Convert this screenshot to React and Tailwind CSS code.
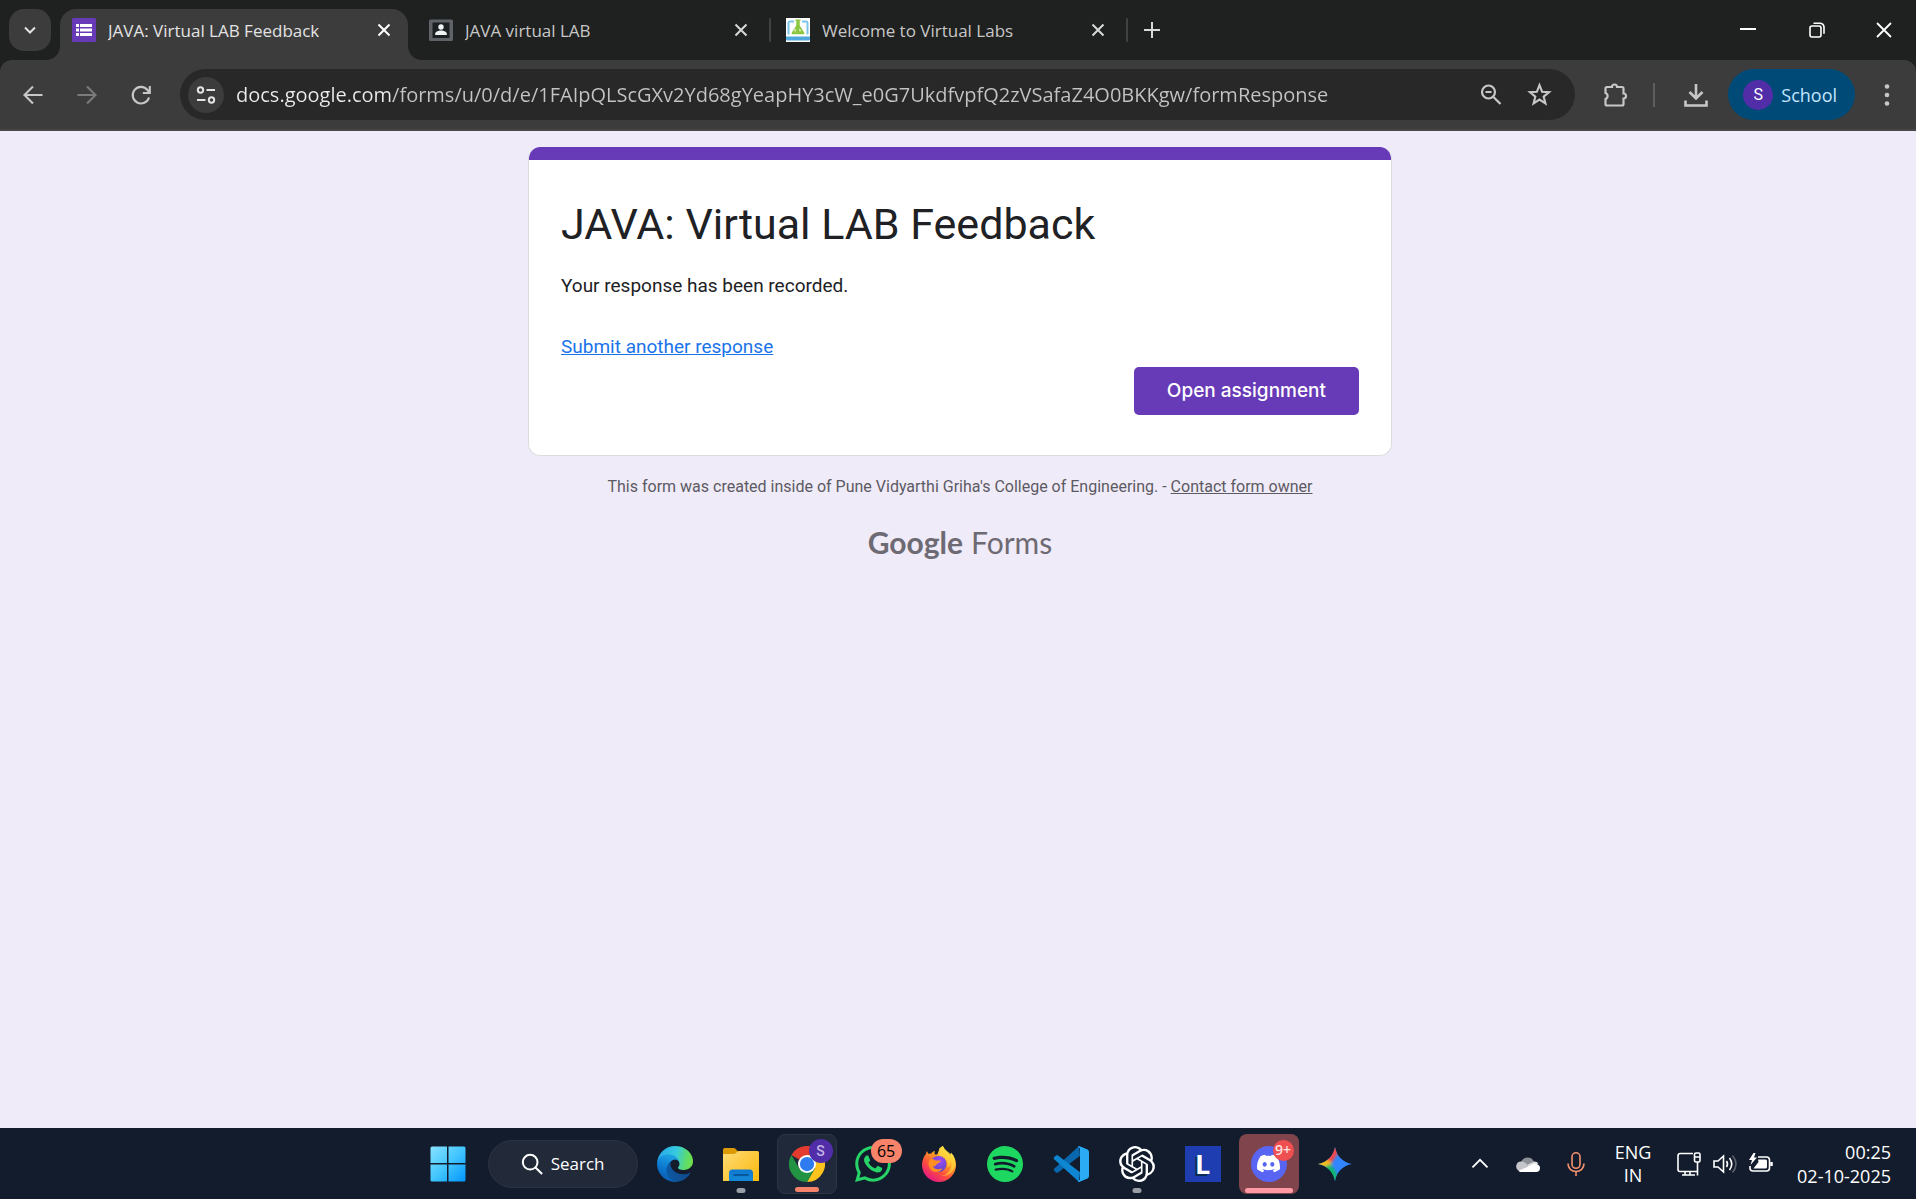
import React from "react";
import { SiOpenai, SiSpotify, SiWhatsapp, SiDiscord } from "react-icons/si";

const UI = "font-['Open_Sans','Noto_Sans',sans-serif]";

function Stroke({ size = 24, width = 2, children, className = "", box = 24 }) {
  return (
    <svg width={size} height={size} viewBox={`0 0 ${box} ${box}`} fill="none" stroke="currentColor" strokeWidth={width} className={`shrink-0 ${className}`} aria-hidden="true">
      {children}
    </svg>
  );
}

function IconButton({ label, className = "", children }) {
  return (
    <button type="button" aria-label={label} className={`flex shrink-0 items-center justify-center ${className}`}>
      {children}
    </button>
  );
}

function FormsFavicon() {
  return (
    <svg width="24" height="24" viewBox="0 0 24 24" aria-hidden="true">
      <rect width="24" height="24" rx="1.5" fill="#673ab7" />
      <g fill="#fff">
        <rect x="4" y="6" width="3" height="3" />
        <rect x="8" y="6" width="12" height="3" />
        <rect x="4" y="10.5" width="3" height="3" />
        <rect x="8" y="10.5" width="12" height="3" />
        <rect x="4" y="15" width="3" height="3" />
        <rect x="8" y="15" width="12" height="3" />
      </g>
    </svg>
  );
}

function ClassroomFavicon() {
  return (
    <svg width="24" height="24" viewBox="0 0 24 24" aria-hidden="true">
      <rect y="1.5" width="24" height="21.5" rx="1.5" fill="#5f6368" />
      <rect x="3.5" y="4.5" width="17" height="15.5" fill="#1d2023" />
      <circle cx="12" cy="9" r="2.7" fill="#f1f3f4" />
      <path d="M6.2 17v-1.2c0-2 3-3.3 5.8-3.3s5.800 1.300 5.800 3.300V17z" fill="#f1f3f4" />
    </svg>
  );
}

function LabsFavicon() {
  return (
    <svg width="24" height="24" viewBox="0 0 24 24" aria-hidden="true">
      <rect width="24" height="24" fill="#fff" />
      <path d="M8 3.500H4a1.500 1.500 0 0 0-1.500 1.500v11.500M16 3.500h4A1.500 1.500 0 0 1 21.500 5v11.500" stroke="#7cc4e8" strokeWidth="2" fill="none" />
      <path d="M0 18.500h24v2.500a1.500 1.500 0 0 1-1.500 1.500h-21A1.500 1.500 0 0 1 0 21z" fill="#4fa9dc" />
      <path d="M9.500 1.500h5v1.500h-.8v4.500l4.600 7.200a1 1 0 0 1-.9 1.500H6.600a1 1 0 0 1-.9-1.500l4.600-7.200V3h-.8z" fill="#8cc63f" />
      <path d="M8 11.500l2-.5-.7 4zM13 10l2.500 3-2 .5z" fill="#e5f3c4" />
    </svg>
  );
}

function CloseX({ className = "" }) {
  return (
    <Stroke size={24} width={2} className={className}>
      <path d="M6.500 6.500l11 11M17.500 6.500l-11 11" />
    </Stroke>
  );
}

function Tab({ icon, title, active, className = "" }) {
  return (
    <div className={`relative flex items-center pr-3 pl-3 ${active ? "h-[51px] rounded-t-2xl bg-[#3c3c3c] pb-[9px] text-[#e3e3e3]" : "h-[51px] pb-[9px] text-[#c7c7c7]"} ${className}`}>
      {active && (
        <>
          <svg width="14" height="14" viewBox="0 0 14 14" className="absolute bottom-0 left-[-14px]" aria-hidden="true"><path d="M14 0v14H0A14 14 0 0 0 14 0z" fill="#3c3c3c" /></svg>
          <svg width="14" height="14" viewBox="0 0 14 14" className="absolute right-[-14px] bottom-0" aria-hidden="true"><path d="M0 0v14h14A14 14 0 0 1 0 0z" fill="#3c3c3c" /></svg>
        </>
      )}
      <button type="button" role="tab" aria-selected={!!active} className="flex min-w-0 flex-1 items-center gap-3 text-left">
        {icon}
        <span className="truncate pt-[2px] text-[17px] leading-6">{title}</span>
      </button>
      <IconButton label={`Close ${title}`}><CloseX className={active ? "text-white" : "text-[#d8d8d8]"} /></IconButton>
    </div>
  );
}

function TabStrip() {
  return (
    <header className="flex h-[60px] items-start bg-[#1f2120] pt-[9px] pl-[9px]">
      <IconButton label="Search tabs" className="h-[42px] w-[42px] rounded-[15px] bg-[#3c3c3c] text-[#e3e3e3]">
        <Stroke size={20} width={2.4}><path d="M6 9l6 6 6-6" /></Stroke>
      </IconButton>
      <div role="tablist" className="ml-[9px] flex">
        <Tab active icon={<FormsFavicon />} title="JAVA: Virtual LAB Feedback" className="w-[348px]" />
        <Tab icon={<ClassroomFavicon />} title="JAVA virtual LAB" className="ml-[9px] w-[348px]" />
        <div className="mr-[3px] ml-1 mt-[9px] h-6 w-[2px] rounded bg-[#3f4241]" />
        <Tab icon={<LabsFavicon />} title="Welcome to Virtual Labs" className="w-[348px]" />
      </div>
      <div className="mr-[3px] ml-1 mt-[9px] h-6 w-[2px] rounded bg-[#3f4241]" />
      <IconButton label="New tab" className="h-[42px] w-[42px] text-[#d8d8d8]">
        <Stroke size={24} width={2}><path d="M12 4v16M4 12h16" /></Stroke>
      </IconButton>
      <div className="ml-auto flex text-white">
        <IconButton label="Minimize" className="h-[42px] w-[69px]"><Stroke size={16} box={16}><path d="M0 7h16" /></Stroke></IconButton>
        <IconButton label="Restore" className="h-[42px] w-[70px]">
          <Stroke size={16} box={16} width={1.6}><rect x="1" y="4" width="11" height="11" rx="2" /><path d="M4.500 1.200H11a4 4 0 0 1 4 4v6.500" /></Stroke>
        </IconButton>
        <IconButton label="Close window" className="h-[42px] w-16"><Stroke size={16} box={16} width={1.8}><path d="M1 1l14 14M15 1L1 15" /></Stroke></IconButton>
      </div>
    </header>
  );
}

function Toolbar() {
  return (
    <nav className="flex h-[71px] items-center rounded-t-xl border-b-2 border-[#474747] bg-[#3c3c3c] pl-[15px] text-[#c7c7c7]">
      <IconButton label="Back" className="h-9 w-9"><Stroke size={24} width={2.1}><path d="M21.500 12H4M12 3.500L3.500 12l8.500 8.500" /></Stroke></IconButton>
      <IconButton label="Forward" className="ml-[18px] h-9 w-9 text-[#7b7b7b]"><Stroke size={24} width={2.1}><path d="M2.500 12H20M12 3.500l8.500 8.500-8.500 8.500" /></Stroke></IconButton>
      <IconButton label="Reload" className="ml-[18px] h-9 w-9"><Stroke size={24} width={2.1}><path d="M20 14.500A8.300 8.300 0 1 1 18.500 7L20.500 9.500M20.800 3v7h-7" /></Stroke></IconButton>
      <div className="ml-[21px] flex h-[51px] min-w-0 flex-1 items-center rounded-full bg-[#282828] pr-5 pl-2">
        <IconButton label="View site information" className="h-9 w-9 rounded-full bg-[#3c3c3c] text-[#e3e3e3]">
          <Stroke size={24} width={2}><circle cx="6.500" cy="7" r="2.700" /><path d="M12.500 7H21M3 17h8.500" /><circle cx="17.500" cy="17" r="2.700" /></Stroke>
        </IconButton>
        <input
          type="text"
          aria-label="Address and search bar"
          defaultValue="docs.google.com/forms/u/0/d/e/1FAIpQLScGXv2Yd68gYeapHY3cW_e0G7UkdfvpfQ2zVSafaZ4O0BKKgw/formResponse"
          className="ml-3 h-9 min-w-0 flex-1 bg-[linear-gradient(90deg,#ececec_157px,#c4c4c4_157px)] bg-clip-text text-xl text-transparent outline-none"
        />
        <IconButton label="Zoom" className="h-8 w-8"><Stroke size={24} width={2.2}><circle cx="9.500" cy="9" r="6.500" /><path d="M6.500 9h6M14.200 13.700l7.300 7.300" /></Stroke></IconButton>
        <IconButton label="Bookmark this tab" className="ml-4 h-8 w-8"><Stroke size={25} width={2}><path d="M12 3l2.500 6.300 6.700.4-5.200 4.300 1.700 6.600L12 16.900l-5.700 3.700L8 14 2.800 9.700l6.700-.4z" /></Stroke></IconButton>
      </div>
      <IconButton label="Extensions" className="ml-6 h-8 w-8"><Stroke size={28} width={2.2} box={28}><path d="M4.500 7.500q0-1.500 1.500-1.500h5a2.500 2.500 0 0 1 5 0H21q1.500 0 1.500 1.500v5a2.500 2.500 0 0 1 0 5v5.500q0 1.500-1.500 1.500H6q-1.500 0-1.500-1.500v-5a3.200 3.200 0 0 0 0-6z" /></Stroke></IconButton>
      <div className="ml-[22px] h-6 w-[2px] bg-[#5e5e5e]" />
      <IconButton label="Downloads" className="ml-[25px] h-8 w-8"><Stroke size={28} width={2.6} box={28}><path d="M14 3v14M7.500 11l6.500 6.500 6.500-6.500M3.500 19.500v5h21v-5" /></Stroke></IconButton>
      <button type="button" className="ml-4 flex h-[51px] shrink-0 items-center gap-2 rounded-full bg-[#004a77] pr-[18px] pl-[15px] text-[#c2e7ff]">
        <span className="flex h-[30px] w-[30px] items-center justify-center rounded-full bg-[#512da8] font-['Roboto',sans-serif] text-base text-white">S</span>
        <span className="text-lg leading-6">School</span>
      </button>
      <IconButton label="Chrome menu" className="mr-[11px] ml-[14px] h-9 w-9">
        <svg width="28" height="28" viewBox="0 0 28 28" fill="currentColor" aria-hidden="true"><circle cx="14" cy="5.500" r="2.300" /><circle cx="14" cy="14" r="2.300" /><circle cx="14" cy="22.500" r="2.300" /></svg>
      </IconButton>
    </nav>
  );
}

function FormPage() {
  return (
    <main className="flex flex-1 flex-col items-center bg-[#f0ebf8] pt-4 pr-[2px] pl-[6px] font-['Roboto',sans-serif]">
      <section className="w-full max-w-[864px] overflow-hidden rounded-xl border border-[#dadce0] border-t-0 bg-white">
        <div className="h-[13px] bg-[#673ab7]" />
        <div className="px-8 pt-[35px] pb-10 text-[#202124]">
          <h1 className="text-[43px] leading-[58px]">JAVA: Virtual LAB Feedback</h1>
          <p className="mt-[19px] text-[19px] leading-7">Your response has been recorded.</p>
          <p className="mt-[33px] text-[19px] leading-7"><a href="#another" className="text-[#1a73e8] underline">Submit another response</a></p>
          <div className="mt-[6px] flex justify-end">
            <button type="button" className="h-12 rounded-[5px] bg-[#673ab7] px-[33px] font-['Inter',sans-serif] text-[19px] font-medium text-white">Open assignment</button>
          </div>
        </div>
      </section>
      <p className="mt-[19px] text-base leading-6 text-[#5c5a63]">
        This form was created inside of Pune Vidyarthi Griha's College of Engineering. - <a href="#contact" className="underline">Contact form owner</a>
      </p>
      <a href="#forms" className="mt-[23px] flex items-baseline gap-2 font-['Lato',sans-serif] text-[30px] leading-10 text-[#6d6a73]">
        <span className="font-bold">Google</span><span>Forms</span>
      </a>
    </main>
  );
}

function WindowsLogo() {
  return (
    <svg width="36" height="36" viewBox="0 0 36 36" aria-hidden="true">
      <defs><linearGradient id="win" x1="0" y1="0" x2="36" y2="36" gradientUnits="userSpaceOnUse"><stop stopColor="#8ae3ff" /><stop offset=".5" stopColor="#43c6ff" /><stop offset="1" stopColor="#0093fb" /></linearGradient></defs>
      <path d="M2 .5h15v16.500H.5V2A1.500 1.500 0 0 1 2 .5zM18.500.5H34A1.500 1.500 0 0 1 35.500 2v15h-17zM.5 18.500H17v17H2A1.500 1.500 0 0 1 .5 34zM18.500 18.500h17V34a1.500 1.500 0 0 1-1.500 1.500H18.500z" fill="url(#win)" />
    </svg>
  );
}

function EdgeLogo() {
  return (
    <svg width="36" height="36" viewBox="0 0 256 256" aria-hidden="true">
      <defs>
        <linearGradient id="e1" x1="60" y1="175" x2="240" y2="175" gradientUnits="userSpaceOnUse"><stop stopColor="#0c59a4" /><stop offset="1" stopColor="#114a8b" /></linearGradient>
        <linearGradient id="e2" x1="110" y1="90" x2="40" y2="240" gradientUnits="userSpaceOnUse"><stop stopColor="#1b9de2" /><stop offset=".5" stopColor="#0c78cf" /><stop offset="1" stopColor="#0a5cb0" /></linearGradient>
        <linearGradient id="e3" x1="10" y1="60" x2="250" y2="110" gradientUnits="userSpaceOnUse"><stop stopColor="#28a8e8" /><stop offset=".5" stopColor="#36cbe0" /><stop offset=".8" stopColor="#5adb72" /><stop offset="1" stopColor="#6fe04a" /></linearGradient>
      </defs>
      <path d="M231 190a94 94 0 0 1-10.500 4.700 101.900 101.900 0 0 1-36 6.400c-47.400 0-88.700-32.600-88.700-74.500a31.500 31.500 0 0 1 16.400-27.300C69.400 101.100 58.400 145.700 58.400 171.900c0 74 68.100 81.400 82.800 81.400 7.900 0 19.800-2.300 27-4.600l1.300-.4a128.300 128.300 0 0 0 66.600-52.800 4 4 0 0 0-5.100-5.500z" fill="url(#e1)" />
      <path d="M105.700 241.400a79.200 79.200 0 0 1-22.700-21.300 80.700 80.700 0 0 1 29.500-120.800c3.200-1.500 8.500-4.100 15.600-4a32.400 32.400 0 0 1 25.700 13 31.900 31.900 0 0 1 6.300 18.700c0-.2 24.500-79.600-80-79.600-43.900 0-80 41.700-80 78.200a130.200 130.200 0 0 0 12.100 56 128 128 0 0 0 156.400 67 75.500 75.500 0 0 1-62.800-7.200z" fill="url(#e2)" />
      <path d="M152.300 148.900c-.8 1-3.300 2.500-3.300 5.700 0 2.600 1.700 5.200 4.800 7.300 14.300 10 41.400 8.600 41.500 8.600a59.600 59.600 0 0 0 30.300-8.300 61.400 61.400 0 0 0 30.400-52.900c.3-22.400-8-37.300-11.300-43.900C223.500 23.900 177.700 0 128 0A128 128 0 0 0 0 126.200c.5-36.500 36.800-66 80-66 3.500 0 23.500.3 42 10 16.300 8.600 24.900 18.900 30.800 29.200 6.200 10.700 7.300 24.100 7.300 29.500s-2.700 13.300-7.800 20z" fill="url(#e3)" />
    </svg>
  );
}

function FolderLogo() {
  return (
    <svg width="36" height="36" viewBox="0 0 36 36" aria-hidden="true">
      <defs>
        <linearGradient id="f1" x1="0" y1="4" x2="30" y2="34" gradientUnits="userSpaceOnUse"><stop stopColor="#ffdc78" /><stop offset="1" stopColor="#fbbc16" /></linearGradient>
        <linearGradient id="f2" x1="0" y1="24" x2="0" y2="35" gradientUnits="userSpaceOnUse"><stop stopColor="#0f78d0" /><stop offset="1" stopColor="#1389d8" /></linearGradient>
      </defs>
      <path d="M0 3.500Q0 2 1.500 2h9q1.300 0 2.200.9L15 5.500 12 8H0z" fill="#dc9a05" />
      <path d="M0 8h10.500q1.300 0 2.300-1l1.200-1.200q.8-.8 2-.8h18.500Q36 5 36 6.500V35H0z" fill="url(#f1)" />
      <path d="M6 35v-8q0-3.500 3.500-3.500h17Q30 23.500 30 27v8z" fill="url(#f2)" />
      <path d="M11 29h14" stroke="#064b8c" strokeWidth="1.600" strokeLinecap="round" />
    </svg>
  );
}

function ChromeLogo() {
  return (
    <svg width="36" height="36" viewBox="0 0 48 48" aria-hidden="true">
      <path d="M24 24L3.200 12A24 24 0 0 1 44.800 12H24z" fill="#e33b2e" />
      <path d="M24 12h20.800A24 24 0 0 1 24 48l10.400-18z" fill="#fcc31e" />
      <path d="M3.200 12L13.600 30 24 36l10.400-6L24 48A24 24 0 0 1 3.200 12z" fill="#229342" />
      <circle cx="24" cy="24" r="12" fill="#fff" />
      <circle cx="24" cy="24" r="9.500" fill="#2e7cf0" />
    </svg>
  );
}

function FirefoxLogo() {
  return (
    <svg width="36" height="36" viewBox="0 0 36 36" aria-hidden="true">
      <defs>
        <linearGradient id="x1" x1="29" y1="4" x2="8" y2="34" gradientUnits="userSpaceOnUse"><stop stopColor="#fff44f" /><stop offset=".35" stopColor="#ff9a25" /><stop offset=".65" stopColor="#ff4f3d" /><stop offset="1" stopColor="#e31587" /></linearGradient>
        <radialGradient id="x2" cx=".6" cy=".3" r=".7"><stop stopColor="#a04bf5" /><stop offset="1" stopColor="#5a46c8" /></radialGradient>
      </defs>
      <path d="M1 19C1 14 3 10 5 8c0-1 .3-2 1-3 .4 1.500 1 2.300 2 3 .7-.4 1.500-.5 2.300-.5C11.300 6.200 12.600 5 14 5c-.7 1.300-.6 2.500 0 3.500h2C18 6 17.500 2 22 0c1.500 4.500 5 6 7.500 9L30 6.500c3.500 3.500 5 8 5 12.500a17 17 0 0 1-34 0z" fill="url(#x1)" />
      <path d="M18 2.500C18 8 17 9 18.500 11 25 10 28 16 26 22c3-1.500 4-5 4-8 2 10-4 16-11 16 14 1 18-12 13-20-3-4-8-5-10-10-3 1.500-3.500 2-4 2.500z" fill="#ffd83d" opacity=".65" />
      <circle cx="17.500" cy="18" r="8" fill="url(#x2)" />
      <path d="M8.500 14c2-1.500 4-1.500 6 .5h5c.6 1.500-2 2.300-3.500 3.500-1.400 1.300-1.300 2.700-4 2.300 1 3 5 4 9.500 2-2 4.500-10 5.500-13-.5-1.300-2.600-1.200-5.200 0-7.800z" fill="#ff8f24" />
    </svg>
  );
}

function VSCodeLogo() {
  return (
    <svg width="36" height="36" viewBox="0 0 36 36" aria-hidden="true">
      <path d="M26 0L1.200 22.800a1.400 1.400 0 0 0 0 2L3 26.500q1 .8 2 .1L27 9.800z" fill="#0967ad" />
      <path d="M26 36L1.200 13.200a1.400 1.400 0 0 1 0-2L3 9.500q1-.8 2-.1l22 16.800z" fill="#0e86d2" />
      <path d="M26 0l8.500 3.600Q36 4.300 36 6v24q0 1.700-1.500 2.400L26 36q-.6 0-1-.5l2-2V2.500l-2-2q.4-.5 1-.5z" fill="#2aabf4" />
    </svg>
  );
}

function GeminiLogo() {
  return (
    <svg width="36" height="36" viewBox="0 0 36 36" aria-hidden="true">
      <defs>
        <clipPath id="gem"><path d="M18 1c1.500 9 8 15.500 17 17-9 1.500-15.500 8-17 17C16.500 26 10 19.500 1 18 10 16.500 16.500 10 18 1z" /></clipPath>
        <filter id="soft" x="-50%" y="-50%" width="200%" height="200%"><feGaussianBlur stdDeviation="1.800" /></filter>
      </defs>
      <g clipPath="url(#gem)">
        <rect width="36" height="36" fill="#3186ff" />
        <g filter="url(#soft)"><path d="M8-4h15l-2 11-6 9-8 1z" fill="#f94543" /><path d="M-4 10l13 3 6 4-3 5-16 2z" fill="#fabc12" /><path d="M4 22l9-4 6 8 2 13H4z" fill="#10b962" /></g>
      </g>
    </svg>
  );
}

function LetterLogo() {
  return (
    <span className="flex h-9 w-9 items-center justify-center bg-[#1d3db0] font-['Open_Sans',sans-serif] text-[27px] leading-9 font-bold text-white [text-shadow:-2px_2px_0_#0b2c55]">L</span>
  );
}

function TaskItem({ label, children, tile = "", indicator = "" }) {
  return (
    <button type="button" aria-label={label} className={`relative flex h-[60px] w-[60px] shrink-0 items-center justify-center rounded-lg ${tile}`}>
      {children}
      {indicator && <span className={`absolute bottom-px left-1/2 h-[5px] -translate-x-1/2 rounded-full ${indicator}`} />}
    </button>
  );
}

function Taskbar() {
  return (
    <footer className="grid h-[71px] grid-cols-[3fr_auto_4fr] items-center bg-[#131c2d] text-white">
      <div />
      <div className="flex items-center gap-[6px] pl-1">
        <TaskItem label="Start"><WindowsLogo /></TaskItem>
        <button type="button" className="mr-px ml-1 flex h-12 w-[150px] items-center justify-center gap-2 rounded-full border border-[#2b3342] bg-[#222a3a] text-[17px]">
          <Stroke size={22} width={2.2}><circle cx="10" cy="10" r="8" /><path d="M15.800 15.800L23 23" /></Stroke>
          Search
        </button>
        <TaskItem label="Microsoft Edge"><EdgeLogo /></TaskItem>
        <TaskItem label="File Explorer" indicator="w-[9px] bg-[#9a9ea6]"><FolderLogo /></TaskItem>
        <TaskItem label="Google Chrome" tile="border border-[#2d3542] bg-[#20293a]" indicator="w-6 bg-[#f6836a]">
          <ChromeLogo />
          <span className="absolute top-1 right-[3px] flex h-6 w-6 items-center justify-center rounded-full bg-[#512da8] font-['Roboto',sans-serif] text-sm font-medium text-[#c3b4e4]">S</span>
        </TaskItem>
        <TaskItem label="WhatsApp">
          <SiWhatsapp size={36} color="#25d366" />
          <span className="absolute top-[5px] left-7 flex h-6 w-[31px] items-center justify-center rounded-full bg-[#f6836a] text-base text-black">65</span>
        </TaskItem>
        <TaskItem label="Firefox"><FirefoxLogo /></TaskItem>
        <TaskItem label="Spotify"><SiSpotify size={36} color="#1ed760" /></TaskItem>
        <TaskItem label="Visual Studio Code"><VSCodeLogo /></TaskItem>
        <TaskItem label="ChatGPT" indicator="w-[9px] bg-[#9a9ea6]"><SiOpenai size={36} color="#fff" /></TaskItem>
        <TaskItem label="L"><LetterLogo /></TaskItem>
        <TaskItem label="Discord" tile="bg-[#80454c]" indicator="w-12 bg-[#ff99a4]">
          <span className="flex h-9 w-9 items-center justify-center rounded-full bg-[#5865f2]"><SiDiscord size={23} color="#fff" /></span>
          <span className="absolute top-[6px] right-[5px] flex h-[21px] w-[21px] items-center justify-center rounded-full bg-[#f04f51] text-sm font-semibold text-[#ffe3e3]">9+</span>
        </TaskItem>
        <TaskItem label="Gemini"><GeminiLogo /></TaskItem>
      </div>
      <div className="flex items-center justify-end pr-[25px]">
        <IconButton label="Show hidden icons" className="h-12 w-12"><Stroke size={20} width={2.2}><path d="M3 16l9-9 9 9" /></Stroke></IconButton>
        <IconButton label="OneDrive" className="h-12 w-12">
          <svg width="24" height="24" viewBox="0 0 24 24" aria-hidden="true"><path d="M5 10a7 7 0 0 1 13 0l-6 5z" fill="#8e9199" /><path d="M5 9.500c3 0 4 1 8 4.500L3 19A5 5 0 0 1 5 9.500z" fill="#c4c6ca" /><path d="M12 12.500l6-3a5 5 0 0 1 4.500 2L12 15z" fill="#d9dadd" /><path d="M2.500 18.700L18 11.500c3 0 6 1.500 6 4.500s-2 4-4 4H5c-1 0-2-.5-2.500-1.300z" fill="#fff" /></svg>
        </IconButton>
        <IconButton label="Microphone in use" className="h-12 w-12 text-[#f3936f]"><Stroke size={24} width={1.600}><rect x="8" y="0.800" width="8" height="15.500" rx="4" /><path d="M4 11.500c0 5 3.500 8 8 8s8-3 8-8M12 19.500V24" /></Stroke></IconButton>
        <button type="button" className="mr-3 ml-[9px] flex h-12 w-12 flex-col items-center justify-center text-lg leading-[23px]"><span>ENG</span><span>IN</span></button>
        <button type="button" aria-label="Network, volume and battery" className="flex h-12 items-center gap-3 px-2">
          <Stroke size={24} width={1.600}><path d="M16 1.500H3A2 2 0 0 0 1 3.500v14a2 2 0 0 0 2 2h17M8 19.500v3.500M13 19.500v3.500M5 23h13" /><rect x="17.500" y="1" width="5.500" height="9" rx="1.500" /><path d="M17.500 5h5.500M20.500 10v13.500" /></Stroke>
          <Stroke size={24} width={1.600}><path d="M1 9h4l5.500-5v16L5 15H1z" /><path d="M13.500 9q2 3 0 6M16.500 6q4.500 6 0 12" /><path d="M19.500 3.500q7 8.500 0 17" opacity=".3" /></Stroke>
          <Stroke size={24} width={1.600}><path d="M9 5h8.500a3 3 0 0 1 3 3v8a3 3 0 0 1-3 3H4a3 3 0 0 1-3-3v-2" /><path d="M9 7.500h7.500q1.500 0 1.500 1.500v6q0 1.500-1.500 1.500H4.500L9.500 10z" fill="currentColor" stroke="none" /><path d="M22.500 10v4" strokeWidth="2.500" /><path d="M4.500 1L0 8h3l-1.500 5L8 5.500H5L6.500 1z" fill="currentColor" stroke="none" /></Stroke>
        </button>
        <button type="button" className="ml-4 text-right text-lg leading-6">
          <time dateTime="2025-10-02T00:25"><span className="block">00:25</span><span className="block">02-10-2025</span></time>
        </button>
      </div>
    </footer>
  );
}

export default function App() {
  return (
    <div className={`flex min-h-screen flex-col bg-[#1f2120] ${UI}`}>
      <TabStrip />
      <Toolbar />
      <FormPage />
      <Taskbar />
    </div>
  );
}
